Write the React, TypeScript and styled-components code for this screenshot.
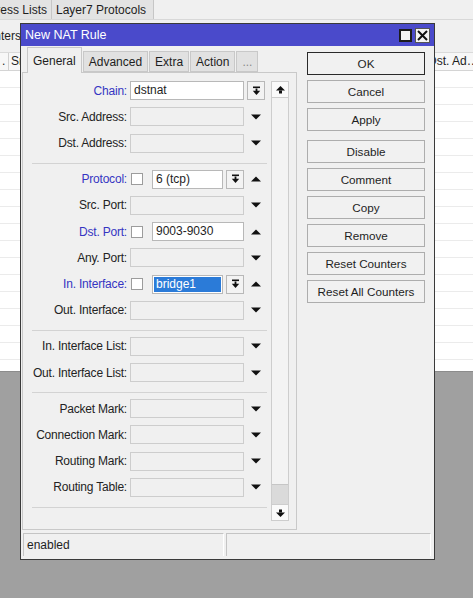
import styled, { createGlobalStyle } from 'styled-components';

const GlobalStyle = createGlobalStyle`
  html, body {
    margin: 0;
    padding: 0;
  }
  body {
    font-family: 'Liberation Sans', Arial, sans-serif;
    font-size: 12px;
    color: #1e1e1e;
  }
  * {
    box-sizing: border-box;
  }
`;

const Desktop = styled.div`
  position: relative;
  width: 473px;
  height: 598px;
  overflow: hidden;
  background: #a0a0a0;
`;

/* list window behind the dialog */
const ListWindow = styled.div`
  height: 372px;
  background: #f0f0f0;
  display: flex;
  flex-direction: column;
  overflow: hidden;
  border-bottom: 1px solid #8c8c8c;
`;

const ListTabs = styled.div`
  display: flex;
  height: 20px;
  border-bottom: 1px solid #d8d8d8;
`;

const ListTab = styled.div<{ $width: number; $clipLeft?: boolean }>`
  width: ${(p) => p.$width}px;
  flex-shrink: 0;
  display: flex;
  align-items: center;
  justify-content: ${(p) => (p.$clipLeft ? 'flex-end' : 'flex-start')};
  padding: 0 4px;
  background: #e3e3e3;
  border-right: 1px solid #c6c6c6;
  white-space: nowrap;
  overflow: hidden;
`;

const Toolbar = styled.div`
  height: 32px;
  display: flex;
  align-items: center;
`;

const ToolButton = styled.div`
  width: 21px;
  height: 22px;
  display: flex;
  align-items: center;
  justify-content: flex-end;
  white-space: nowrap;
  overflow: hidden;
`;

const HeadRow = styled.div`
  height: 19px;
  display: flex;
  background: #f7f7f7;
  border-top: 1px solid #dadada;
  border-bottom: 1px solid #d4d4d4;
`;

const HeadCell = styled.div<{ $width: number }>`
  width: ${(p) => p.$width}px;
  flex-shrink: 0;
  padding: 0 2px;
  line-height: 17px;
  border-right: 1px solid #d0d0d0;
  white-space: nowrap;
  overflow: hidden;
  text-overflow: ellipsis;
`;

const ListBody = styled.div`
  flex: 1;
  background: repeating-linear-gradient(to bottom, #ffffff 0 16px, #ebebeb 16px 17px);
`;

/* NAT rule dialog */
const Dialog = styled.div`
  position: absolute;
  left: 20px;
  top: 23px;
  width: 415px;
  height: 537px;
  display: flex;
  flex-direction: column;
  background: #f0f0f0;
  border: 1px solid #3a3a3a;
`;

const TitleBar = styled.div`
  height: 22px;
  flex-shrink: 0;
  display: flex;
  align-items: center;
  justify-content: space-between;
  padding: 0 4px;
  background: #4a4acb;
  color: #ffffff;
  font-size: 12.5px;
`;

const WindowButtons = styled.div`
  display: flex;
  align-items: center;
  gap: 3px;
`;

const MaxButton = styled.div`
  width: 13px;
  height: 13px;
  background: #f4f4f4;
  border: 2px solid #1c1c1c;
`;

const CloseButton = styled.div`
  width: 15px;
  height: 15px;
  display: flex;
  align-items: center;
  justify-content: center;
  background: #f4f4f4;
  border: 1px solid #555555;
`;

const Body = styled.div`
  flex: 1;
  display: flex;
  padding: 1px 9px 0 1px;
`;

const LeftColumn = styled.div`
  width: 275px;
  display: flex;
  flex-direction: column;
`;

const TabRow = styled.div`
  height: 25px;
  display: flex;
  align-items: flex-end;
  gap: 1px;
  padding-left: 5px;
`;

const Tab = styled.div<{ $active?: boolean; $faded?: boolean }>`
  position: relative;
  z-index: ${(p) => (p.$active ? 1 : 0)};
  height: ${(p) => (p.$active ? 26 : 21)}px;
  margin-bottom: ${(p) => (p.$active ? -1 : 0)}px;
  display: flex;
  align-items: center;
  padding: 0 5px;
  background: ${(p) => (p.$active ? '#f0f0f0' : '#e1e1e1')};
  border: 1px solid #c8c8c8;
  border-bottom: ${(p) => (p.$active ? 'none' : '1px solid #c8c8c8')};
  color: ${(p) => (p.$faded ? '#8a8a8a' : '#1e1e1e')};
  white-space: nowrap;
`;

const Panel = styled.div`
  height: 458px;
  display: flex;
  padding: 2px 7px 0 9px;
  border: 1px solid #c9c9c9;
`;

const Form = styled.div`
  width: 235px;
  display: flex;
  flex-direction: column;
`;

const Section = styled.div`
  display: flex;
  flex-direction: column;
  gap: 7.25px;
  padding: 6px 0 10px;
  border-bottom: 1px solid #d3d3d3;
`;

const Row = styled.div`
  height: 19px;
  display: flex;
  align-items: center;
`;

const Label = styled.div<{ $active?: boolean }>`
  width: 95px;
  margin-right: 3px;
  text-align: right;
  white-space: nowrap;
  letter-spacing: -0.2px;
  color: ${(p) => (p.$active ? '#3535c2' : '#232323')};
`;

const FieldArea = styled.div`
  width: 114px;
  height: 19px;
  display: flex;
  align-items: center;
`;

const CheckBox = styled.div`
  width: 12px;
  height: 12px;
  flex-shrink: 0;
  margin: 0 9px 0 1px;
  background: #ffffff;
  border: 1px solid #9c9c9c;
`;

const TextBox = styled.div<{ $filled?: boolean }>`
  flex: 1;
  min-width: 0;
  height: 19px;
  padding: 0 3px;
  line-height: 17px;
  white-space: nowrap;
  overflow: hidden;
  background: ${(p) => (p.$filled ? '#ffffff' : '#f0f0f0')};
  border: 1px solid ${(p) => (p.$filled ? '#b8b8b8' : '#cdcdcd')};
`;

const Selection = styled.span`
  display: block;
  height: 15px;
  margin: 1px -2px 0;
  padding-left: 2px;
  line-height: 15px;
  background: #2b7bd8;
  color: #ffffff;
`;

const DropButton = styled.div<{ $gap?: number }>`
  width: 18px;
  height: 19px;
  flex-shrink: 0;
  margin-left: ${(p) => p.$gap ?? 0}px;
  display: flex;
  align-items: center;
  justify-content: center;
  background: #f3f3f3;
  border: 1px solid #b8b8b8;
`;

const ArrowColumn = styled.div`
  width: 20px;
  height: 19px;
  margin-left: 2px;
  display: flex;
  align-items: center;
  justify-content: center;
`;

const ScrollBar = styled.div`
  width: 18px;
  height: 440px;
  margin: 6px 0 0 4px;
  display: flex;
  flex-direction: column;
  background: #f3f3f3;
  border: 1px solid #cdcdcd;
`;

const ScrollArrow = styled.div<{ $bottom?: boolean }>`
  height: 16px;
  display: flex;
  align-items: center;
  justify-content: center;
  background: #fafafa;
  border-top: ${(p) => (p.$bottom ? '1px solid #cdcdcd' : 'none')};
  border-bottom: ${(p) => (p.$bottom ? 'none' : '1px solid #cdcdcd')};
`;

const ScrollTrack = styled.div`
  flex: 1;
  display: flex;
  flex-direction: column;
  justify-content: flex-end;
`;

const ScrollThumb = styled.div`
  height: 20px;
  background: #dadada;
  border-top: 1px solid #c6c6c6;
`;

const ButtonColumn = styled.div`
  width: 118px;
  margin-left: 10px;
  padding-top: 5px;
  display: flex;
  flex-direction: column;
  gap: 5px;
`;

const ActionButton = styled.div<{ $primary?: boolean; $spaced?: boolean }>`
  height: 23px;
  display: flex;
  align-items: center;
  justify-content: center;
  margin-top: ${(p) => (p.$spaced ? 4 : 0)}px;
  background: #f1f1f1;
  border: 1px solid ${(p) => (p.$primary ? '#2a2a2a' : '#adadad')};
  font-size: 11.7px;
  color: #1e1e1e;
  white-space: nowrap;
`;

const StatusBar = styled.div`
  height: 27px;
  flex-shrink: 0;
  display: flex;
  gap: 2px;
  padding: 1px 3px 3px 2px;
`;

const StatusPane = styled.div<{ $width?: number }>`
  width: ${(p) => (p.$width ? `${p.$width}px` : 'auto')};
  flex: ${(p) => (p.$width ? 'none' : 1)};
  display: flex;
  align-items: center;
  padding-left: 3px;
  border-top: 1px solid #c4c4c4;
  border-left: 1px solid #c4c4c4;
  border-right: 1px solid #ffffff;
`;

const DropIcon = () => (
  <svg width="9" height="10" viewBox="0 0 9 10">
    <rect x="1" y="0.5" width="7" height="1.6" fill="#111" />
    <rect x="3.6" y="2.5" width="1.8" height="2.5" fill="#111" />
    <polygon points="0.8,4.8 8.2,4.8 4.5,9" fill="#111" />
  </svg>
);

const Triangle = ({ up }: { up?: boolean }) => (
  <svg width="10" height="6" viewBox="0 0 10 6">
    <polygon points={up ? '0,5.5 10,5.5 5,0.5' : '0,0.5 10,0.5 5,5.5'} fill="#111" />
  </svg>
);

const ScrollIcon = ({ down }: { down?: boolean }) => (
  <svg width="9" height="8" viewBox="0 0 9 8" style={{ transform: down ? 'rotate(180deg)' : undefined }}>
    <polygon points="4.5,0 9,4.5 0,4.5" fill="#111" />
    <rect x="3" y="4.5" width="3" height="3" fill="#111" />
  </svg>
);

const CloseIcon = () => (
  <svg width="11" height="11" viewBox="0 0 11 11">
    <path d="M1 1 L10 10 M10 1 L1 10" stroke="#111" strokeWidth="2" />
  </svg>
);

type Field = {
  label: string;
  active?: boolean;
  check?: boolean;
  value?: string;
  selected?: boolean;
  combo?: boolean;
  arrow?: 'up' | 'down' | 'drop';
};

const sections: Field[][] = [
  [
    { label: 'Chain:', active: true, value: 'dstnat', arrow: 'drop' },
    { label: 'Src. Address:', arrow: 'down' },
    { label: 'Dst. Address:', arrow: 'down' },
  ],
  [
    { label: 'Protocol:', active: true, check: true, value: '6 (tcp)', combo: true, arrow: 'up' },
    { label: 'Src. Port:', arrow: 'down' },
    { label: 'Dst. Port:', active: true, check: true, value: '9003-9030', arrow: 'up' },
    { label: 'Any. Port:', arrow: 'down' },
    { label: 'In. Interface:', active: true, check: true, value: 'bridge1', selected: true, combo: true, arrow: 'up' },
    { label: 'Out. Interface:', arrow: 'down' },
  ],
  [
    { label: 'In. Interface List:', arrow: 'down' },
    { label: 'Out. Interface List:', arrow: 'down' },
  ],
  [
    { label: 'Packet Mark:', arrow: 'down' },
    { label: 'Connection Mark:', arrow: 'down' },
    { label: 'Routing Mark:', arrow: 'down' },
    { label: 'Routing Table:', arrow: 'down' },
  ],
];

const buttons = ['OK', 'Cancel', 'Apply', 'Disable', 'Comment', 'Copy', 'Remove', 'Reset Counters', 'Reset All Counters'];

const FieldRow = ({ field }: { field: Field }) => (
  <Row>
    <Label $active={field.active}>{field.label}</Label>
    <FieldArea>
      {field.check && <CheckBox />}
      <TextBox $filled={field.value !== undefined}>
        {field.selected ? <Selection>{field.value}</Selection> : field.value}
      </TextBox>
      {field.combo && (
        <DropButton $gap={3}>
          <DropIcon />
        </DropButton>
      )}
    </FieldArea>
    <ArrowColumn>
      {field.arrow === 'drop' && (
        <DropButton>
          <DropIcon />
        </DropButton>
      )}
      {field.arrow === 'up' && <Triangle up />}
      {field.arrow === 'down' && <Triangle />}
    </ArrowColumn>
  </Row>
);

export default function App() {
  return (
    <>
      <GlobalStyle />
      <Desktop>
        <ListWindow>
          <ListTabs>
            <ListTab $width={52} $clipLeft>
              Address Lists
            </ListTab>
            <ListTab $width={102}>Layer7 Protocols</ListTab>
          </ListTabs>
          <Toolbar>
            <ToolButton>Reset Counters</ToolButton>
          </Toolbar>
          <HeadRow>
            <HeadCell $width={9}>.</HeadCell>
            <HeadCell $width={417}>Src. Address</HeadCell>
            <HeadCell $width={56}>Dst. Address</HeadCell>
          </HeadRow>
          <ListBody />
        </ListWindow>

        <Dialog>
          <TitleBar>
            <span>New NAT Rule</span>
            <WindowButtons>
              <MaxButton />
              <CloseButton>
                <CloseIcon />
              </CloseButton>
            </WindowButtons>
          </TitleBar>
          <Body>
            <LeftColumn>
              <TabRow>
                <Tab $active>General</Tab>
                <Tab>Advanced</Tab>
                <Tab>Extra</Tab>
                <Tab>Action</Tab>
                <Tab $faded>...</Tab>
              </TabRow>
              <Panel>
                <Form>
                  {sections.map((fields, i) => (
                    <Section key={i}>
                      {fields.map((f) => (
                        <FieldRow key={f.label} field={f} />
                      ))}
                    </Section>
                  ))}
                </Form>
                <ScrollBar>
                  <ScrollArrow>
                    <ScrollIcon />
                  </ScrollArrow>
                  <ScrollTrack>
                    <ScrollThumb />
                  </ScrollTrack>
                  <ScrollArrow $bottom>
                    <ScrollIcon down />
                  </ScrollArrow>
                </ScrollBar>
              </Panel>
            </LeftColumn>
            <ButtonColumn>
              {buttons.map((b) => (
                <ActionButton key={b} $primary={b === 'OK'} $spaced={b === 'Disable'}>
                  {b}
                </ActionButton>
              ))}
            </ButtonColumn>
          </Body>
          <StatusBar>
            <StatusPane $width={201}>enabled</StatusPane>
            <StatusPane />
          </StatusBar>
        </Dialog>
      </Desktop>
    </>
  );
}
